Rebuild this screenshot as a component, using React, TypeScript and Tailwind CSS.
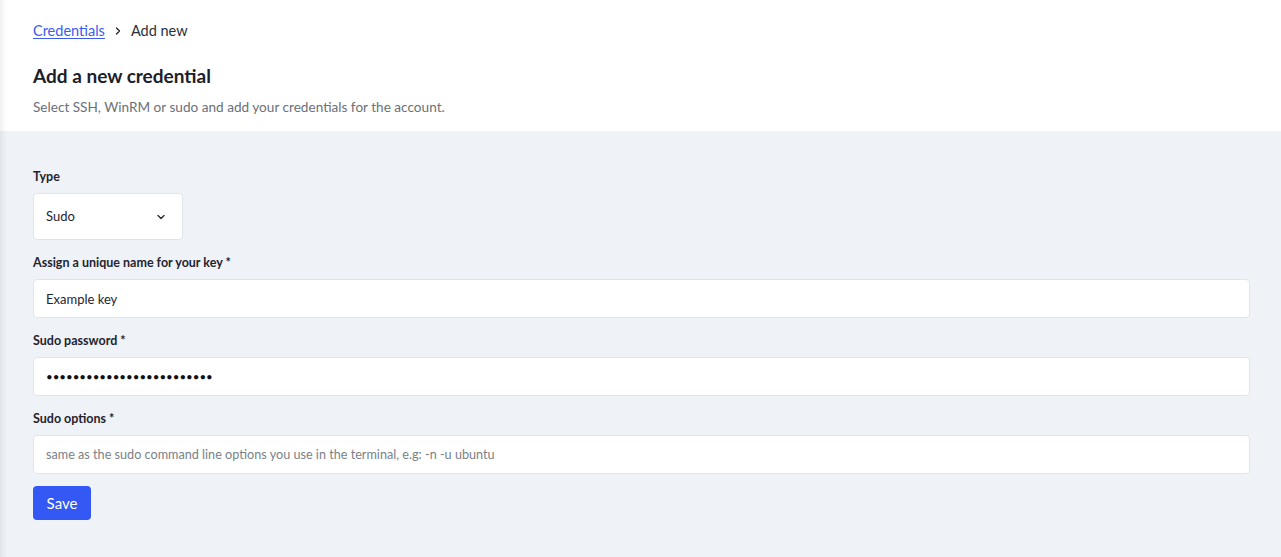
import { ChevronDown, ChevronRight } from "lucide-react";

const font = { fontFamily: '"Lato", "Noto Sans", sans-serif' };

function Label({ children }: { children: React.ReactNode }) {
  return <label className="mb-[7px] block text-[12.5px] font-bold leading-[18px] text-[#1f2430]">{children}</label>;
}

const inputClass =
  "block h-[39px] w-[1217px] rounded-[4px] border border-[#e1e5ea] bg-white px-[12px] text-[13px] text-[#1f2430] outline-none";

export default function App() {
  return (
    <div
      style={font}
      className="min-h-[557px] w-full bg-[#eff2f6] shadow-[inset_10px_0_10px_-10px_rgba(0,0,0,0.12)]"
    >
      <header className="bg-white px-[33px] pb-[14px] pt-[22px] shadow-[inset_10px_0_10px_-10px_rgba(0,0,0,0.12)]">
        <nav className="flex items-center gap-[7px] text-[14.5px] leading-[18px]">
          <a href="#" className="text-[#3b5bf0] underline underline-offset-2">
            Credentials
          </a>
          <ChevronRight className="h-3 w-3 text-[#1f2430]" strokeWidth={2.5} />
          <span className="text-[#2a2f3a]">Add new</span>
        </nav>
        <h1 className="mt-[24px] text-[19px] font-bold leading-6 text-[#1c2029]">Add a new credential</h1>
        <p className="mt-[9px] text-[13.6px] leading-5 text-[#6b7079]">
          Select SSH, WinRM or sudo and add your credentials for the account.
        </p>
      </header>

      <form className="px-[33px] pt-[37px]" onSubmit={(e) => e.preventDefault()}>
        <Label>Type</Label>
        <div className="flex h-[47px] w-[150px] items-center justify-between rounded-[4px] border border-[#e1e5ea] bg-white pl-[12px] pr-[15px] text-[13px] text-[#1f2430]">
          <span>Sudo</span>
          <ChevronDown className="h-3 w-3" strokeWidth={2.5} />
        </div>

        <div className="mt-[14px]">
          <Label>Assign a unique name for your key *</Label>
          <input defaultValue="Example key" className={inputClass} />
        </div>

        <div className="mt-[14px]">
          <Label>Sudo password *</Label>
          <input
            type="password"
            defaultValue="abcdefghijklmnopqrstuvwxy"
            className="block h-[39px] w-[1217px] rounded-[4px] border border-[#e1e5ea] bg-white px-[12px] text-[11.5px] text-[#111] outline-none"
          />
        </div>

        <div className="mt-[14px]">
          <Label>Sudo options *</Label>
          <input
            placeholder="same as the sudo command line options you use in the terminal, e.g: -n -u ubuntu"
            className="block h-[39px] w-[1217px] rounded-[4px] border border-[#e1e5ea] bg-white px-[12px] text-[12.65px] text-[#1f2430] outline-none placeholder:text-[#7a7f88]"
          />
        </div>

        <button
          type="submit"
          className="mt-[12px] h-[34px] w-[58px] rounded-[4px] bg-[#3358f4] text-[15px] text-white"
        >
          Save
        </button>
      </form>
    </div>
  );
}
